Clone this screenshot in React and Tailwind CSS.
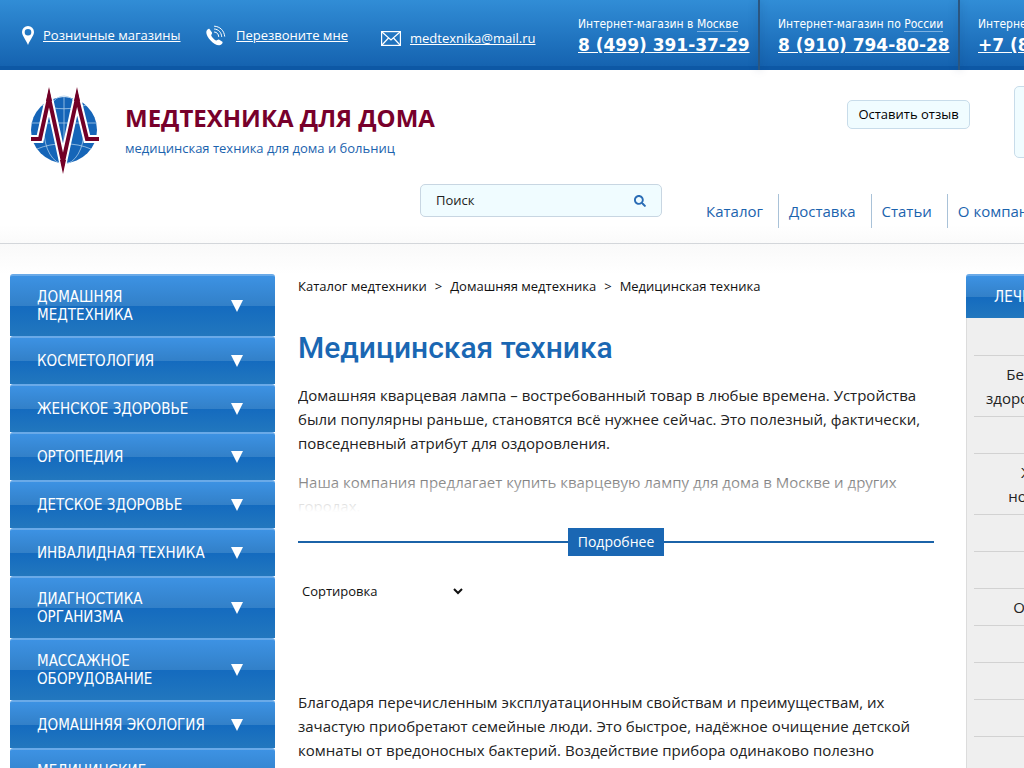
import React from 'react';
import { FaSearch } from 'react-icons/fa';

const phones = [
  { label: 'Интернет-магазин в', city: 'Москве', number: '8 (499) 391-37-29' },
  { label: 'Интернет-магазин по', city: 'России', number: '8 (910) 794-80-28' },
  { label: 'Интернет-магазин в', city: 'Туле', number: '+7 (800) 555-80-28' },
];

const navItems = ['Каталог', 'Доставка', 'Статьи', 'О компании', 'Контакты'];

const catalog = [
  'Домашняя медтехника',
  'Косметология',
  'Женское здоровье',
  'Ортопедия',
  'Детское здоровье',
  'Инвалидная техника',
  'Диагностика организма',
  'Массажное оборудование',
  'Домашняя экология',
  'Медицинские приборы',
];

const diseases = [
  ['Аллергия'],
  ['Беременность и женское', 'здоровье, восстановление сил'],
  ['Варикоз'],
  ['Желудок и кишечник', 'новорожденные и мамы'],
  ['Кашель'],
  ['Насморк'],
  ['Ортопедия, спина, шея'],
  ['Простуда'],
  ['Псориаз'],
  ['Суставы'],
  ['Урология'],
  ['Экзема'],
];

const Logo = () => (
  <svg width="70" height="88" viewBox="0 0 70 88" className="shrink-0">
    <circle cx="34" cy="44" r="33" fill="#1565b8" />
    <g fill="none" stroke="#a9cbea" strokeWidth="0.800">
      <path d="M34 11v66M1 37h66M12 19c13 5 31 5 44 0M7 63c16-7 38-7 54 0" />
      <ellipse cx="34" cy="44" rx="20" ry="34" />
    </g>
    <path d="M0 53h10l9-41 14 64 14-64 10 41h13" fill="none" stroke="#fff" strokeWidth="8" strokeMiterlimit="20" />
    <path d="M1 53h9l9-41 14 64 14-64 10 41h12" fill="none" stroke="#720027" strokeWidth="4" strokeMiterlimit="20" />
    <path d="M19 1l3 14h-6ZM47 1l3 14h-6ZM33 88l-3-14h6Z" fill="#720027" />
  </svg>
);

const PinIcon = () => (
  <svg width="12" height="19" viewBox="0 0 12 19" fill="#fff">
    <path fillRule="evenodd" d="M6 0a6 6 0 0 1 6 6c0 3.500-3.500 7-6 13C3.500 13 0 9.500 0 6a6 6 0 0 1 6-6Zm0 3a3.300 3.300 0 1 0 0 6.600A3.300 3.300 0 0 0 6 3Z" />
  </svg>
);

const CallIcon = () => (
  <svg width="21" height="21" viewBox="0 0 21 21">
    <path d="M3.500 4 6 7.500c.5 1-.8 2-.8 2.800.4 1.700 3.200 4.600 5 5.200.8.200 1.700-1.300 2.700-.9l3.500 2.100c.8.800-.8 3.300-2.900 3.500C8.500 20.800 0 12.500.3 7 .4 5.200 2.600 3.200 3.500 4Z" fill="#fff" />
    <g fill="none" stroke="#fff" strokeWidth="1" strokeLinecap="round">
      <path d="M8.500 7c2.500.2 4 2 4.200 4.500" />
      <path d="M8.500 4c4 .3 6.800 3.200 7.200 7.500" />
      <path d="M8.500 1.200c5.500.3 9.600 4.300 10.200 10" />
    </g>
  </svg>
);

const MailIcon = () => (
  <svg width="20" height="15" viewBox="0 0 20 15" fill="none" stroke="#fff" strokeWidth="1.200">
    <rect x="0.600" y="0.600" width="18.800" height="13.800" />
    <path d="m1 1 9 8 9-8M1 14l6.500-7M19 14l-6.500-7" />
  </svg>
);

const TopBar = () => (
  <div className="flex h-[70px] border-b-4 border-[#0d58a5] bg-linear-to-b from-[#318dd6] to-[#1563b0] text-white">
    <div className="flex w-[560px] shrink-0 pl-[22px] text-[13px] leading-[18px]">
      <a href="#" className="flex h-[70px] w-[184px] items-center gap-[9px] underline"><PinIcon />Розничные магазины</a>
      <a href="#" className="flex h-[70px] w-[175px] items-center gap-[9px] underline"><CallIcon />Перезвоните мне</a>
      <a href="#" className="flex h-[76px] items-center gap-[9px] underline"><MailIcon />medtexnika@mail.ru</a>
    </div>
    {phones.map((phone) => (
      <React.Fragment key={phone.number}>
        <div className="w-[198px] shrink-0 pt-4 pl-[18px]">
          <p className="font-['DejaVu_Sans_Condensed'] text-[12px] leading-4 whitespace-nowrap">
            {phone.label} <span className="border-b border-[#7fb2e2]">{phone.city}</span>
          </p>
          <a href="#" className="block font-['DejaVu_Sans'] text-[17px] leading-[26px] font-bold whitespace-nowrap underline">{phone.number}</a>
        </div>
        <div className="h-[70px] w-0.5 shrink-0 bg-[#2b5680] shadow-[0_0_8px_rgba(10,50,100,0.4)]" />
      </React.Fragment>
    ))}
  </div>
);

const Header = () => (
  <header className="border-b border-[#d3d6da] bg-[linear-gradient(#fff_155px,#fafafa)]">
    <div className="flex h-[114px] pt-4 pl-[30px]">
      <Logo />
      <div className="w-[722px] shrink-0 pt-4 pl-[25px]">
        <a href="#" className="block text-[24px] leading-8 font-bold text-[#78002b] uppercase">Медтехника для дома</a>
        <p className="mt-1 text-[13px] leading-5 text-[#1b63ae]">медицинская техника для дома и больниц</p>
      </div>
      <button className="mt-[14px] ml-[25px] h-[29px] w-[123px] shrink-0 rounded-[5px] border border-[#c8dcea] bg-[#f0fcff] text-[13px]">Оставить отзыв</button>
      <div className="ml-11 h-[72px] w-[216px] shrink-0 rounded-[5px] border border-[#c8dcea] bg-[#f0fcff]" />
    </div>
    <div className="flex h-[59px] items-start pl-[420px]">
      <form className="flex h-[33px] w-[242px] shrink-0 items-center rounded-[5px] border border-[#c8d6e2] bg-[#f0fcff] px-[15px]">
        <input type="text" aria-label="Поиск" placeholder="Поиск" className="min-w-0 flex-1 bg-transparent text-[13px] outline-none placeholder:text-[#222]" />
        <button type="button" aria-label="Найти" className="text-[#2a6cb5]"><FaSearch size={12} /></button>
      </form>
      <nav className="mt-[10px] ml-[34px] flex text-[15px] text-[#1b63ae]">
        {navItems.map((item) => (
          <a key={item} href="#" className="flex h-[34px] items-center border-r border-[#a9c2d8] pr-[15px] pl-[10px] whitespace-nowrap">{item}</a>
        ))}
      </nav>
    </div>
  </header>
);

const Sidebar = () => (
  <aside className="w-[265px] shrink-0 font-['DejaVu_Sans_Condensed','Open_Sans',sans-serif]">
    {catalog.map((item) => (
      <a
        key={item}
        href="#"
        className="flex min-h-12 items-center rounded-t-[3px] border-t-2 border-[#6aaae8] bg-[linear-gradient(#3d92e3,#3280c8_50%,#146bbf_50%,#2277be)] py-3 pr-8 pl-[27px] text-[15px] leading-[18px] text-white uppercase"
      >
        <span className="mr-[19px] w-[175px]">{item}</span>
        <svg width="12" height="12" viewBox="0 0 12 12" fill="#fff" className="shrink-0"><path d="M0 0h12L6 12Z" /></svg>
      </a>
    ))}
  </aside>
);

const Diseases = () => (
  <aside className="w-[265px] shrink-0">
    <h2 className="rounded-t-[3px] border-t-2 border-[#6aaae8] bg-[linear-gradient(#3d92e3,#3280c8_50%,#146bbf_50%,#2277be)] py-3 pl-7 font-['DejaVu_Sans_Condensed'] text-[15px] leading-[18px] text-white uppercase">Лечение болезней</h2>
    <ul className="border border-t-0 border-[#dcdcdc] bg-[#efefef] px-[7px] pt-px text-center text-[15px] leading-6 text-[#222]">
      {diseases.map((lines) => (
        <li key={lines[0]} className="border-b border-[#d2d2d2] py-1.5">
          {lines.map((line) => (
            <a key={line} href="#" className="block whitespace-nowrap">{line}</a>
          ))}
        </li>
      ))}
    </ul>
  </aside>
);

const Content = () => (
  <main className="min-w-0 flex-1 text-[15px] leading-6 text-[#222]">
    <div className="flex gap-2 text-[13px] whitespace-nowrap text-[#111]">
      <a href="#">Каталог медтехники</a>
      <span>&gt;</span>
      <a href="#">Домашняя медтехника</a>
      <span>&gt;</span>
      <span>Медицинская техника</span>
    </div>
    <h1 className="mt-[30px] font-[Roboto] text-[30px] leading-10 font-medium text-[#1a67b3]">Медицинская техника</h1>
    <div className="relative mt-[15px] h-[129px] overflow-hidden">
      <p>Домашняя кварцевая лампа – востребованный товар в любые времена. Устройства<br />были популярны раньше, становятся всё нужнее сейчас. Это полезный, фактически,<br />повседневный атрибут для оздоровления.</p>
      <p className="mt-[15px]">Наша компания предлагает купить кварцевую лампу для дома в Москве и других<br />городах.</p>
      <div className="absolute inset-x-0 bottom-0 h-[56px] bg-linear-to-b from-transparent to-white" />
    </div>
    <div className="mt-4 flex items-center">
      <div className="h-0.5 flex-1 bg-[#1b63a8]" />
      <button className="h-7 w-24 bg-[#1a67b3] text-[14px] text-white">Подробнее</button>
      <div className="h-0.5 flex-1 bg-[#1b63a8]" />
    </div>
    <select aria-label="Сортировка" className="mt-[23px] block h-6 w-[168px] bg-white text-[13px] text-[#111]">
      <option>Сортировка</option>
      <option>По цене</option>
    </select>
    <p className="mt-[87px]">Благодаря перечисленным эксплуатационным свойствам и преимуществам, их<br />зачастую приобретают семейные люди. Это быстрое, надёжное очищение детской<br />комнаты от вредоносных бактерий. Воздействие прибора одинаково полезно<br />и взрослым, и детям любого возраста, сохраняющим здоровье.</p>
  </main>
);

const App = () => {
  return (
    <div className="h-screen overflow-hidden bg-white font-['Open_Sans','Noto_Sans',sans-serif]">
      <div className="min-w-[1241px]">
        <TopBar />
        <Header />
        <div className="flex bg-[linear-gradient(#f9f9f9,#fff_30px)] px-[10px] pt-[30px]">
          <Sidebar />
          <div className="flex min-w-0 flex-1 pr-8 pl-[23px]">
            <Content />
          </div>
          <Diseases />
        </div>
      </div>
    </div>
  );
};

export default App;
